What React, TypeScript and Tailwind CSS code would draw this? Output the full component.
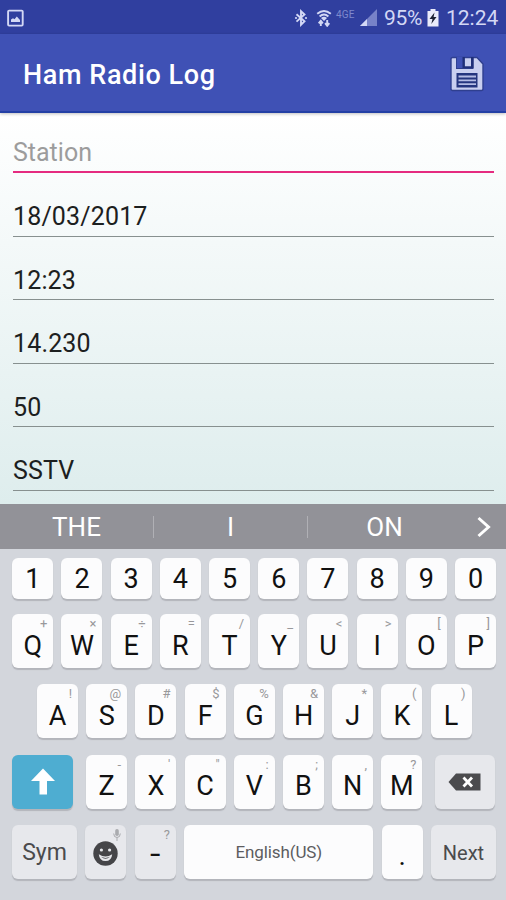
import type { ReactNode } from 'react';
import clsx from 'clsx';

interface KeyProps {
  label?: string;
  hint?: string;
  className?: string;
  children?: ReactNode;
}

const fields = ['18/03/2017', '12:23', '14.230', '50', 'SSTV'];

const numberRow = ['1', '2', '3', '4', '5', '6', '7', '8', '9', '0'];

const topRow = [
  ['Q', '+'],
  ['W', '×'],
  ['E', '÷'],
  ['R', '='],
  ['T', '/'],
  ['Y', '_'],
  ['U', '<'],
  ['I', '>'],
  ['O', '['],
  ['P', ']'],
];

const middleRow = [
  ['A', '!'],
  ['S', '@'],
  ['D', '#'],
  ['F', '$'],
  ['G', '%'],
  ['H', '&'],
  ['J', '*'],
  ['K', '('],
  ['L', ')'],
];

const bottomRow = [
  ['Z', '-'],
  ['X', "'"],
  ['C', '"'],
  ['V', ':'],
  ['B', ';'],
  ['N', ','],
  ['M', '?'],
];

function Key({ label, hint, className, children }: KeyProps) {
  return (
    <button
      className={clsx(
        'relative flex shrink-0 items-center justify-center rounded-[6px] shadow-[0_1.5px_1px_#b3b5bb]',
        className
      )}
    >
      {hint && (
        <span className="absolute right-[6px] top-[2px] text-[13px] leading-[15px] text-[#98989b]">{hint}</span>
      )}
      {label}
      {children}
    </button>
  );
}

function LetterKey({ label, hint }: { label: string; hint: string }) {
  return <Key label={label} hint={hint} className="h-[54px] w-[41px] bg-[#fcfcfd] pt-[10px] text-[27px] leading-none text-[#111]" />;
}

function StatusBar() {
  return (
    <div className="flex h-[34px] items-center bg-[#303f9f] pl-[7px] pr-[7px] pt-[2px] text-[#d3d8f5]">
      <svg width="17" height="18" viewBox="0 0 17 18">
        <rect x="1.1" y="1.6" width="14.6" height="15" rx="1" fill="none" stroke="currentColor" strokeWidth="1.9" />
        <path d="M4 13V10.5L6 9.3L7.5 10.3L9.8 7.6L13 11V13Z" fill="currentColor" />
      </svg>
      <svg className="ml-auto" width="14" height="18" viewBox="0 0 14 18">
        <path d="M2.5 5.2L10.5 12.4L7 15.8V2.2L10.5 5.5L2.5 12.6" fill="none" stroke="currentColor" strokeWidth="1.9" />
        <circle cx="2" cy="9" r="1.1" fill="currentColor" />
        <circle cx="12" cy="9" r="1.1" fill="currentColor" />
      </svg>
      <svg className="ml-[8px]" width="16" height="18" viewBox="0 0 16 18">
        <path d="M1.2 4.8Q8 -0.8 14.8 4.8M3.6 7.5Q8 3.6 12.4 7.5" fill="none" stroke="currentColor" strokeWidth="1.9" />
        <path d="M5 9Q8 6.4 11 9L8 12Z" fill="currentColor" />
        <path d="M4.8 17V12M2.7 14.3L4.8 11.8L6.9 14.3M11.2 11V16M9.1 14.2L11.2 16.8L13.3 14.2" fill="none" stroke="currentColor" strokeWidth="1.9" />
      </svg>
      <span className="ml-[4px] mb-[6px] w-[21px] text-[10px] leading-none tracking-[0.2px] text-[#7f89cd]">4GE</span>
      <svg className="ml-[3px]" width="17" height="18" viewBox="0 0 17 18">
        <path d="M0 17L17 0V17Z" fill="#7782c8" />
        <path d="M0 17L7 10V17Z" fill="currentColor" />
      </svg>
      <span className="ml-[7px] w-[39px] whitespace-nowrap text-[21px] leading-none tracking-[-0.3px]">95%</span>
      <svg className="ml-[4px]" width="12" height="18" viewBox="0 0 12 18">
        <path d="M3.5 0H8.5V2H11.5V17.5H0.5V2H3.5Z" fill="#e9ebfa" />
        <path d="M7.5 3.5L2.5 10H5.5L4.3 15L9.5 8H6.6Z" fill="#1d2233" />
      </svg>
      <span className="ml-[7px] w-[53px] whitespace-nowrap text-[21px] leading-none">12:24</span>
    </div>
  );
}

function AppBar() {
  return (
    <header className="relative flex h-[79px] items-center justify-between border-b-2 border-[#2440a5] bg-[#3f51b5] pl-[23px] pr-[22px] shadow-[0_1px_3px_rgba(0,0,0,0.25)]">
      <h1 className="pt-[6px] text-[27px] font-medium leading-none tracking-[0.6px] text-white">Ham Radio Log</h1>
      <svg className="mt-[2px]" width="34" height="36" viewBox="0 0 34 36">
        <path d="M2.5 1.5H27L33 8V33Q33 34.5 31.5 34.5H2.5Q1 34.5 1 33V3Q1 1.5 2.5 1.5Z" fill="#c9cff0" stroke="#2f3f8f" strokeWidth="1.4" />
        <path d="M6 1V13H23.5V1H21.5V10.5H14.5V1Z" fill="#2c3c8c" />
        <path d="M6.8 0.8H13V12H6.8Z" fill="#3f51b5" />
        <path d="M12.5 1V12H23.5V1H21V10.5H14.8V1Z" fill="#1f2f78" />
        <rect x="6.5" y="17" width="21" height="14.5" fill="#24357f" />
        <path d="M8.5 20.5H26M8.5 24.3H26M8.5 28.1H26" stroke="#b4bce5" strokeWidth="1.8" />
      </svg>
    </header>
  );
}

function LogForm() {
  return (
    <main className="flex h-[391px] flex-col bg-gradient-to-b from-white to-[#deeded] pl-[13px] pr-[12px]">
      <div className="flex h-[60px] shrink-0 items-center border-b-[2.5px] border-[#e52b80] pt-[21px] text-[25px] leading-none text-[#9c9c9c]">
        Station
      </div>
      {fields.map((value) => (
        <div
          key={value}
          className="flex h-[63.5px] shrink-0 items-center border-b-[1.5px] border-[#87908f] pt-[25px] text-[25px] leading-none tracking-[0.15px] text-[#1c2020]"
        >
          {value}
        </div>
      ))}
    </main>
  );
}

function Suggestions() {
  return (
    <div className="flex h-[45px] items-center bg-[#929298] text-[26px] leading-none text-white">
      <span className="w-[153px] text-center">THE</span>
      <span className="h-[22px] w-px bg-[#b0b0b5]" />
      <span className="w-[153px] text-center">I</span>
      <span className="h-[22px] w-px bg-[#b0b0b5]" />
      <span className="w-[153px] text-center">ON</span>
      <svg className="ml-[16px]" width="14" height="22" viewBox="0 0 14 22">
        <path d="M1.5 2L11.5 11L1.5 20" fill="none" stroke="currentColor" strokeWidth="3" />
      </svg>
    </div>
  );
}

function Keyboard() {
  return (
    <div className="flex h-[351px] flex-col bg-[#d3d6dc] pl-[12.3px] pt-[8.5px]">
      <div className="flex gap-[8.2px]">
        {numberRow.map((n) => (
          <Key key={n} label={n} className="h-[41px] w-[41px] bg-[#fcfcfd] pt-[2px] text-[27px] leading-none text-[#111]" />
        ))}
      </div>
      <div className="mt-[15.5px] flex gap-[8.2px]">
        {topRow.map(([label, hint]) => (
          <LetterKey key={label} label={label} hint={hint} />
        ))}
      </div>
      <div className="mt-[16.4px] flex gap-[8.2px] pl-[24.8px]">
        {middleRow.map(([label, hint]) => (
          <LetterKey key={label} label={label} hint={hint} />
        ))}
      </div>
      <div className="mt-[16.4px] flex gap-[8.2px]">
        <Key className="mr-[5.2px] h-[54px] w-[60.5px] bg-[#4eadd1] text-white">
          <svg width="26" height="27" viewBox="0 0 26 27">
            <path d="M13 0.5L25 13H17V26.5H9.5V13H1Z" fill="currentColor" />
          </svg>
        </Key>
        {bottomRow.map(([label, hint]) => (
          <LetterKey key={label} label={label} hint={hint} />
        ))}
        <Key className="ml-[4.2px] h-[54px] w-[60.5px] bg-[#e7e8ec]">
          <svg width="33" height="18" viewBox="0 0 33 18">
            <path d="M0.5 9L8 0.5H32.5V17.5H8Z" fill="#4b4b4e" />
            <path d="M15.5 4.5L24 13.5M24 4.5L15.5 13.5" stroke="#fff" strokeWidth="2.8" />
          </svg>
        </Key>
      </div>
      <div className="mt-[16.2px] flex gap-[8.6px]">
        <Key label="Sym" className="h-[54px] w-[64.4px] bg-[#e7e8ec] pt-[1px] text-[23px] leading-none text-[#4b4b4d]" />
        <Key className="h-[54px] w-[41px] bg-[#e7e8ec] pt-[4px]">
          <svg className="absolute right-[5px] top-[4px]" width="8" height="12" viewBox="0 0 8 12">
            <rect x="2.2" y="0" width="3.6" height="7" rx="1.8" fill="#aaabaf" />
            <path d="M0.7 4.5Q0.7 8.5 4 8.5Q7.3 8.5 7.3 4.5M4 8.5V12" fill="none" stroke="#aaabaf" />
          </svg>
          <svg width="25" height="25" viewBox="0 0 25 25">
            <circle cx="12.5" cy="12.5" r="12.2" fill="#454548" />
            <circle cx="8.4" cy="9" r="1.6" fill="#e7e8ec" />
            <circle cx="16.6" cy="9" r="1.6" fill="#e7e8ec" />
            <path d="M5.8 13.2Q12.5 17.6 19.2 13.2Q18.6 20 12.5 20Q6.4 20 5.8 13.2Z" fill="#e7e8ec" />
            <path d="M8 15.8Q12.5 18 17 15.8Q12.5 19.6 8 15.8Z" fill="#454548" />
          </svg>
        </Key>
        <Key hint="?" className="h-[54px] w-[41px] bg-[#e7e8ec] pt-[5px] text-[30px] leading-none text-[#111]">
          <span className="scale-x-125">-</span>
        </Key>
        <Key label="English(US)" className="h-[54px] w-[188.6px] bg-[#fcfcfd] pt-[2px] text-[17px] leading-none tracking-[-0.1px] text-[#5c5c5f]" />
        <Key label="." className="h-[54px] w-[41px] bg-[#fcfcfd] pt-[8px] text-[28px] leading-none text-[#111]" />
        <Key label="Next" className="h-[54px] w-[64.4px] bg-[#e7e8ec] pt-[2px] text-[20px] leading-none text-[#4b4b4d]" />
      </div>
    </div>
  );
}

export default function App() {
  return (
    <div className="h-[900px] w-[506px] overflow-hidden font-['Roboto',sans-serif]">
      <StatusBar />
      <AppBar />
      <LogForm />
      <Suggestions />
      <Keyboard />
    </div>
  );
}
